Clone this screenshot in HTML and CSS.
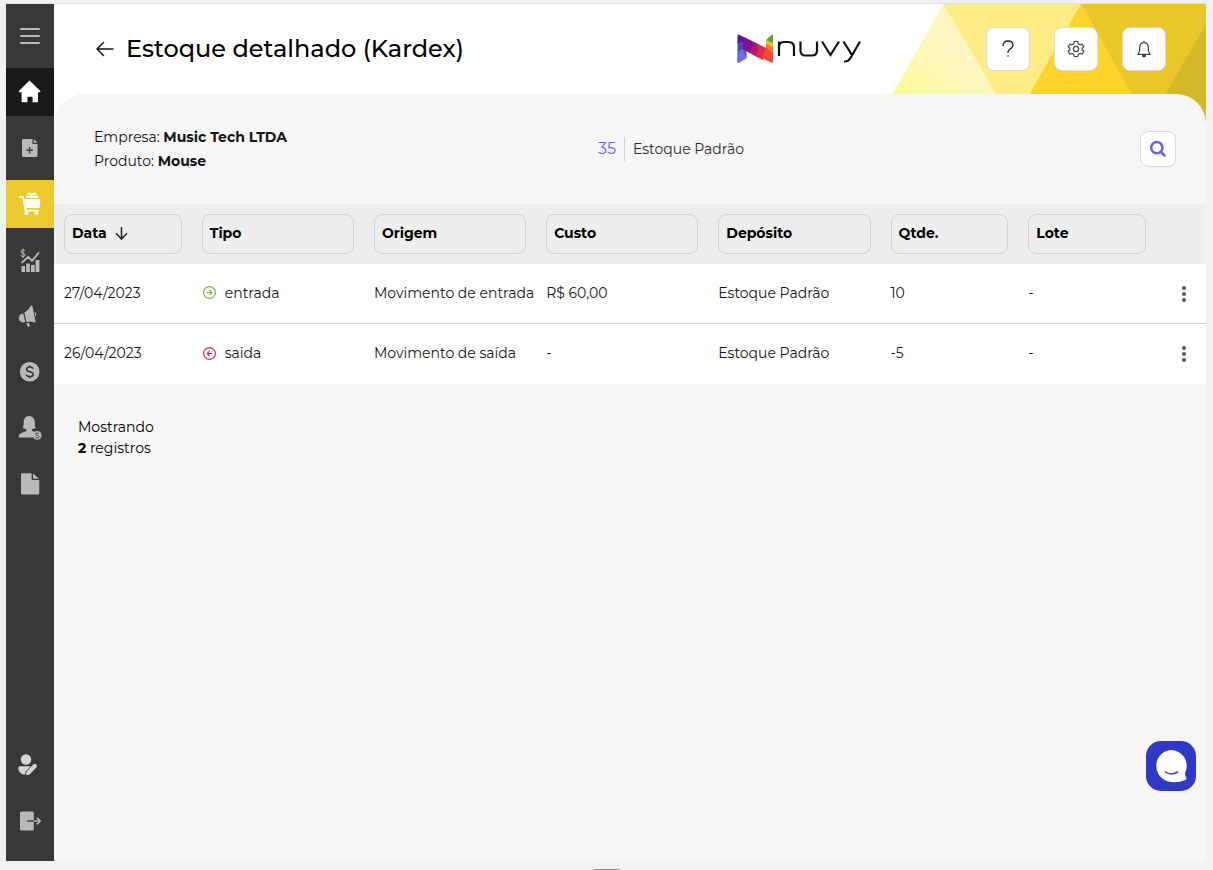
FILE: index.html
```
<!DOCTYPE html>
<html lang="pt-BR">
<head>
<meta charset="utf-8">
<meta name="viewport" content="width=device-width, initial-scale=1">
<title>Estoque detalhado (Kardex)</title>
<link rel="stylesheet" href="styles.css">
</head>
<body>
<div class="app">
  <nav class="sidebar" aria-label="Menu principal">
    <button class="menu-toggle" type="button" aria-label="Menu">
      <svg width="20" height="18" viewBox="0 0 20 18" stroke="#b9b9b9" stroke-width="2" stroke-linecap="round"><path d="M1 2h18M1 9h18M1 16h18"/></svg>
    </button>
    <a class="nav-item nav-home" href="#" aria-label="Início">
      <svg width="24" height="24" viewBox="0 0 24 24" fill="#fff"><path d="M11.500 .6 22.300 10.900q.7 1.300-.8 1.300H20v9.300q0 .7-.8.700h-4.600v-4.600q0-.9-.9-.9h-3.400q-.9 0-.9.900v4.600H4.600q-1 0-1-.9v-9.100H1.700q-1.600 0-.8-1.300z"/></svg>
    </a>
    <a class="nav-item" href="#" aria-label="Cadastros">
      <svg width="24" height="24" viewBox="0 0 24 24"><path fill="#b9b9b9" d="M5 3h9.500v5h5v11.500Q19.500 21 18 21H5.500Q4 21 4 19.500V4q0-1 1-1zM15.800 3l3.700 3.800h-3.700z"/><path d="M8.300 14.200h6.600M11.600 10.900v6.600" stroke="#383838" stroke-width="1.400"/></svg>
    </a>
    <a class="nav-item nav-current" href="#" aria-label="Estoque" aria-current="page">
      <svg width="24" height="24" viewBox="0 0 24 24" fill="none" stroke="#fff"><path fill="#fff" stroke="none" d="M6 7h16.500l-1 9H8zM8 3.500h12V6H8z"/><path stroke-width="1.800" stroke-linecap="round" stroke-linejoin="round" d="M1.500 5h3.500l2.500 13.700h12.100M13.500 3.500q-1.500-3-3.500-1.500M14 3.500q1.500-3 3.500-1.500"/><path stroke="#ebc92f" stroke-width=".7" d="M7 6.500h14"/><g fill="#fff" stroke="none"><circle cx="8.500" cy="21" r="2"/><circle cx="18.500" cy="21" r="2"/></g></svg>
    </a>
    <a class="nav-item" href="#" aria-label="Vendas">
      <svg width="24" height="24" viewBox="0 0 24 24" fill="none" stroke="#b9b9b9"><path fill="#b9b9b9" stroke="none" d="M3.500 18h3.500v6H3.500zM8.200 15.500h3.600V24H8.200zM13 17h3.700v7H13zM17.600 12H21.400v12h-3.800z"/><path stroke-width="1.800" stroke-linejoin="round" stroke-linecap="round" d="M4 14.500l6.300-5.700 3.700 4L20.500 5"/><path stroke-width="1" d="M7 3Q6.500 2 5 2 3 2 3 3.700 3 5 5 5.300 7 5.500 7 7 7 8.500 5 8.500 3.200 8.500 2.700 7.300M5 .7V10"/></svg>
    </a>
    <a class="nav-item" href="#" aria-label="Marketing">
      <svg width="24" height="24" viewBox="0 0 24 24" fill="#b9b9b9"><path d="M13 1.700q.9-.8 1.400.3L17.500 17.600q.1 1.200-1 .9-3.500-1.600-8-.5L6.300 8.600q4.300-2.500 6.700-6.900zM5.200 9.200l2.100 8.700-2.300.5Q3 18.700 2.400 17l-1-4q-.3-1.700 1-2.500zM8.300 19.200l2.600-.3.900 2q.5 1.300-.8 1.800-1.300.4-1.800-.9zM16.400 8q3 .9 1.300 4.900z"/><path d="M.8 13l1.200 4" stroke="#b9b9b9"/></svg>
    </a>
    <a class="nav-item" href="#" aria-label="Financeiro">
      <svg width="24" height="24" viewBox="0 0 24 24"><circle cx="11.700" cy="11.700" r="9.800" fill="#b9b9b9"/><path d="M15 8.700Q14.500 7 11.700 7 8.600 7 8.600 9.300q0 1.900 3.100 2.400 3.500.6 3.500 2.700 0 2.200-3.500 2.200-3 0-3.500-2M11.700 5.300v1.700M11.700 16.600v1.700" fill="none" stroke="#383838" stroke-width="1.500"/></svg>
    </a>
    <a class="nav-item" href="#" aria-label="Clientes">
      <svg width="24" height="24" viewBox="0 0 24 24"><path fill="#b9b9b9" d="M11 0q5.700 0 5.700 6.500 0 3.500 1 5-.8 1.500-3.700 1.500v1.700l3.500 1.500q-2.300 1.800-1.700 5.300H.7q-.2-3.500 2.800-4.500l4.800-1.900V13q-2.800 0-3.600-1.500 1-1.500 1-5Q5.700 0 11 0z"/><circle cx="19.200" cy="19.400" r="4.300" fill="#b9b9b9"/><path d="M20.800 18q-.4-.9-1.700-.9-1.400 0-1.400 1.100 0 .8 1.500 1.100 1.700.3 1.700 1.400 0 1.200-1.700 1.200-1.400 0-1.800-1" fill="none" stroke="#383838" stroke-width=".9"/></svg>
    </a>
    <a class="nav-item" href="#" aria-label="Relatórios">
      <svg width="24" height="24" viewBox="0 0 24 24" fill="#b9b9b9"><path d="M4 1.200h9.600v6.100q0 .7.700.7h7v13.300q0 1.200-1.200 1.200H4.200Q3 22.500 3 21.300V2.300q0-1.100 1-1.100zM15 1.500l6 5.200h-5.500q-.5 0-.5-.6z"/></svg>
    </a>
    <div class="nav-bottom">
      <a class="nav-item" href="#" aria-label="Usuário">
        <svg width="24" height="24" viewBox="0 0 24 24" fill="#d4d4d4"><circle cx="8" cy="6.500" r="5.200"/><path d="M2 13.200h10.800l-5 5-.9 3.600Q1 21 .2 15.200q0-2 1.800-2z"/><path d="M15.300 11.500q1.600-1.300 3 .1 1.300 1.500 0 3l-6.500 6.600q-1.600 1.200-3.600.7-.4-2.300.8-3.900z"/></svg>
      </a>
      <a class="nav-item" href="#" aria-label="Sair">
        <svg width="24" height="24" viewBox="0 0 24 24"><path fill="#b9b9b9" d="M3.500 2.500h10.800q1.500 0 1.500 1.500v16q0 1.500-1.500 1.500H3.500Q2 21.500 2 20V4q0-1.500 1.500-1.500z"/><path d="M9 12h7" stroke="#4a4a4a" stroke-width="1.600"/><path d="M16 12h5M19 8.700l3.200 3.300-3.200 3.300" fill="none" stroke="#b9b9b9" stroke-width="1.600"/></svg>
      </a>
    </div>
  </nav>

  <div class="page">
    <svg class="banner" width="326" height="132" viewBox="0 0 326 132" aria-hidden="true">
      <defs><linearGradient id="pale" x1="0" y1="1" x2="1" y2="0"><stop offset="0" stop-color="#fbf994"/><stop offset=".5" stop-color="#fbf7c0"/><stop offset="1" stop-color="#fbf3bf"/></linearGradient></defs>
      <path fill="url(#pale)" d="M63 0 12 91h106z"/>
      <path fill="#ffec86" d="M63 0h139l-53 91h-32z"/>
      <path fill="#fdd52a" d="M201 0l52 91H149z"/>
      <path fill="#e9c72b" d="M201 0h125v132h-50l-24-41z"/>
      <path fill="#d4b828" d="M326 20v112h-50l9-41z"/>
    </svg>
    <header class="topbar">
      <div class="title-group">
        <button class="back" type="button" aria-label="Voltar">
          <svg width="18" height="16" viewBox="0 0 18 16" fill="none" stroke="#111" stroke-width="1.500" stroke-linecap="round" stroke-linejoin="round"><path d="M17 8H1M7.500 1.500 1 8l6.500 6.500"/></svg>
        </button>
        <h1>Estoque detalhado (Kardex)</h1>
      </div>
      <svg class="logo" width="126" height="32" viewBox="0 0 126 32" role="img" aria-label="nuvy">
        <path fill="#3f4bc4" d="M1.500 8l9 7v10l-9 4z"/>
        <path fill="#6c6ee8" d="M1.500 29V20l5-5 4 10-7 4.500q-2 1-2-.5z"/>
        <path fill="#5b178f" d="M1.500 3q0-2.200 2-1L11 5.500 6 14l-4.500-4z"/>
        <path fill="#3a4fc0" d="M1.500 10l5-1.500 3 6.500-4 1z"/>
        <path fill="#86128f" d="M9 4.500l11 5.500-6 10.500L6 15z"/>
        <path fill="#b5186e" d="M19 9.500l5 2.500-3 12-8-4.500z"/>
        <path fill="#e02a48" d="M23 11.500l8 4-4 11.500-7-3.500z"/>
        <path fill="#f4483a" d="M30 14l7 4v10q0 2.500-2 1.500l-9-4.500z"/>
        <path fill="#ff762d" d="M30 10l7 2v8l-7-5.500z"/>
        <path fill="#f7bd27" d="M30 7l7 1v6l-7-3z"/>
        <path fill="#4eac38" d="M30 7l5.500-5Q37 1 37 3v7z"/>
        <g fill="none" stroke="#111" stroke-width="2.200"><path d="M43 23V8.500M43 14q0-5 5-5h4q6 0 6 5v9M64.500 8.500v9q0 5 5 5h6.500q5 0 5-5v-9M86 8.500l8.500 13.500L103 8.500M107.500 8.500l8.500 13.500M124 8.500l-9.500 16.500q-2 3.500-5.500 3.500h-1"/></g>
      </svg>
      <div class="actions">
        <button class="square" type="button" aria-label="Ajuda"><svg width="20" height="20" viewBox="0 0 20 20" fill="none" stroke="#222" stroke-width="1.300" stroke-linecap="round"><path d="M5 6.500Q5 2 10 2q5 0 5 4 0 2.500-3 4-2 1.200-2 3.500"/><path d="M10 17v.1" stroke-width="1.500"/></svg></button>
        <button class="square" type="button" aria-label="Configurações"><svg width="20" height="20" viewBox="0 0 20 20" fill="none" stroke="#444" stroke-width="1.200" stroke-linejoin="round"><path d="M8.300 2.500h3.400l.6 2.200 1.500.9 2.300-.6 1.700 2.900-1.600 1.500v1.300l1.600 1.500-1.700 2.900-2.300-.6-1.500.9-.6 2.100H8.300l-.6-2.100-1.500-.9-2.300.6-1.700-2.900 1.600-1.500V9.400L2.200 7.900 3.900 5l2.300.6 1.500-.9z"/><circle cx="10" cy="10" r="2.600"/></svg></button>
        <button class="square" type="button" aria-label="Notificações"><svg width="20" height="20" viewBox="0 0 20 20" fill="none" stroke="#444" stroke-width="1.200" stroke-linecap="round" stroke-linejoin="round"><path d="M10 2v1.500M5.700 12V8.300Q5.900 3.700 10 3.700q4.100 0 4.300 4.600V12l1.900 3.300H3.800z"/><path d="M8.600 16.500q0 1.300 1.400 1.300t1.400-1.300z" fill="#444"/></svg></button>
      </div>
    </header>

    <main class="panel">
      <section class="summary">
        <p class="company">Empresa: <strong>Music Tech LTDA</strong><br>Produto: <strong>Mouse</strong></p>
        <p class="deposit"><span class="total">35</span><span class="deposit-name">Estoque Padrão</span></p>
        <button class="square square-small" type="button" aria-label="Pesquisar"><svg width="18" height="18" viewBox="0 0 18 18" fill="none" stroke="#6464e6" stroke-width="2.500" stroke-linecap="round"><circle cx="7.800" cy="7.700" r="5.600"/><path d="M12 12l3.500 3.500"/></svg></button>
      </section>

      <table class="records">
        <thead>
          <tr>
            <th scope="col"><button class="column" type="button">Data <svg width="14" height="14" viewBox="0 0 14 14" fill="none" stroke="#222" stroke-width="1.500"><path d="M6.500 1v12M1 7.300 6.500 13 12 7.300"/></svg></button></th>
            <th scope="col"><button class="column" type="button">Tipo</button></th>
            <th scope="col"><button class="column" type="button">Origem</button></th>
            <th scope="col"><button class="column" type="button">Custo</button></th>
            <th scope="col"><button class="column" type="button">Depósito</button></th>
            <th scope="col"><button class="column" type="button">Qtde.</button></th>
            <th scope="col"><button class="column" type="button">Lote</button></th>
            <td></td>
          </tr>
        </thead>
        <tbody>
          <tr>
            <td>27/04/2023</td>
            <td class="kind"><svg width="15" height="15" viewBox="0 0 15 15" fill="none" stroke="#76b83a" stroke-width="1.200"><circle cx="7.500" cy="7.500" r="5.900"/><path d="M4.800 7.500h5M7.500 5.200l2.300 2.300-2.300 2.300"/></svg>entrada</td>
            <td>Movimento de entrada</td><td>R$ 60,00</td><td>Estoque Padrão</td><td>10</td><td>-</td>
            <td class="options"><button class="more" type="button" aria-label="Opções"><svg width="4" height="16" viewBox="0 0 4 16" fill="#555"><circle cx="2" cy="2" r="2"/><circle cx="2" cy="8" r="2"/><circle cx="2" cy="14" r="2"/></svg></button></td>
          </tr>
          <tr>
            <td>26/04/2023</td>
            <td class="kind"><svg width="15" height="15" viewBox="0 0 15 15" fill="none" stroke="#dc2456" stroke-width="1.200"><circle cx="7.500" cy="7.500" r="5.900"/><path d="M10.200 7.500h-5M7.500 5.200 5.200 7.500l2.300 2.300"/></svg>saida</td>
            <td>Movimento de saída</td><td>-</td><td>Estoque Padrão</td><td>-5</td><td>-</td>
            <td class="options"><button class="more" type="button" aria-label="Opções"><svg width="4" height="16" viewBox="0 0 4 16" fill="#555"><circle cx="2" cy="2" r="2"/><circle cx="2" cy="8" r="2"/><circle cx="2" cy="14" r="2"/></svg></button></td>
          </tr>
        </tbody>
      </table>
      <p class="count">Mostrando<br><strong>2</strong> registros</p>
    </main>
  </div>
</div>
<button class="chat" type="button" aria-label="Abrir chat">
  <svg width="36" height="36" viewBox="0 0 36 36"><path fill="#fff" d="M18 2a15.800 15.800 0 0 1 14.500 22q-1.300 2.800.8 5.500.7 1.500-1 2.500-10 4-18.500 1A16 16 0 0 1 18 2z"/><path d="M12.500 24q5.500 4 12 0" fill="none" stroke="#2f39c6" stroke-width="1.500" stroke-linecap="round"/></svg>
</button>
<div class="handle"></div>
</body>
</html>
```
FILE: styles.css
```
* { box-sizing: border-box; }

body {
  margin: 0;
  padding: 4px 7px 9px 6px;
  background: #f0f1f3;
  color: #141414;
  font: 14px/24px Montserrat, Inter, "Open Sans", sans-serif;
}

h1, p { margin: 0; }

button {
  margin: 0;
  padding: 0;
  border: 0;
  background: none;
  color: inherit;
  font: inherit;
  cursor: pointer;
}

svg { display: block; flex: none; }
strong { font-weight: 700; }

.app {
  display: flex;
  min-height: calc(100vh - 13px);
  background: #fff;
  box-shadow: 0 -1px 0 #dedfe1;
}

.sidebar {
  display: flex;
  flex: none;
  flex-direction: column;
  gap: 8px;
  width: 48px;
  padding-bottom: 16px;
  background: #383838;
}

.menu-toggle,
.nav-item {
  display: flex;
  align-items: center;
  justify-content: center;
  height: 48px;
}

.menu-toggle { height: 64px; margin-bottom: -8px; }
.nav-home { background: #191919; }
.nav-current { background: #ebc92f; }

.nav-bottom {
  display: flex;
  flex-direction: column;
  gap: 8px;
  margin-top: auto;
}

.page {
  position: relative;
  display: flex;
  flex: 1;
  flex-direction: column;
  min-width: 0;
}

.banner { position: absolute; top: 0; right: 0; }

.topbar {
  position: relative;
  display: grid;
  grid-template-columns: 19fr auto 9fr;
  align-items: center;
  height: 90px;
  padding: 0 40px;
}

.title-group { display: flex; align-items: center; gap: 12px; padding-left: 2px; }
.topbar h1 { font-size: 24px; font-weight: 500; line-height: 32px; color: #000; white-space: nowrap; }
.actions { display: flex; justify-content: flex-end; gap: 24px; }

.square {
  display: flex;
  align-items: center;
  justify-content: center;
  width: 44px;
  height: 44px;
  border: 1px solid #d9d9dc;
  border-radius: 8px;
  background: #fff;
}

.square-small { width: 36px; height: 36px; justify-self: end; }

.panel {
  position: relative;
  flex: 1;
  border-radius: 30px 30px 0 0;
  background: #f6f6f6;
}

.summary {
  display: grid;
  grid-template-columns: 7fr auto 6fr;
  align-items: center;
  height: 110px;
  padding: 0 30px 0 40px;
}

.deposit { display: flex; align-items: center; color: #2c2c2c; }
.total { padding-right: 8px; border-right: 1px solid #d0d0d0; color: #6464e6; font-size: 16px; }
.deposit-name { padding-left: 8px; }

.records { display: block; }
.records thead,
.records tbody { display: block; }

.records tr {
  display: grid;
  grid-template-columns: 4fr 5fr 5fr 5fr 5fr 4fr 4fr 50px;
  align-items: center;
  min-height: 60px;
}

.records thead { background: #eee; }
.records tbody { background: #fff; }
.records tbody tr:not(:last-child) { border-bottom: 1px solid #d3d3d3; }

.records th,
.records td {
  min-width: 0;
  padding: 0 10px;
  text-align: left;
  white-space: nowrap;
}

.records tbody td { padding-bottom: 2px; }
.records tbody .options { padding-bottom: 0; }

.column {
  display: flex;
  align-items: center;
  gap: 8px;
  width: 100%;
  height: 40px;
  padding: 0 7px 2px;
  border: 1px solid #d3d3d5;
  border-radius: 8px;
  color: #000;
  font-weight: 700;
}

.records .kind { display: flex; align-items: center; gap: 8px; }
.more { display: flex; align-items: center; justify-content: center; width: 36px; height: 36px; }

.count { padding: 33px 24px; color: #000; line-height: 21px; }

.chat {
  position: fixed;
  right: 17px;
  bottom: 79px;
  display: flex;
  align-items: center;
  justify-content: center;
  width: 50px;
  height: 50px;
  border-radius: 15px;
  background: #2f39c6;
}

.handle {
  position: fixed;
  bottom: 0;
  left: 50%;
  width: 26px;
  height: 1px;
  margin-left: -13px;
  background: #8c8c8c;
}
```
